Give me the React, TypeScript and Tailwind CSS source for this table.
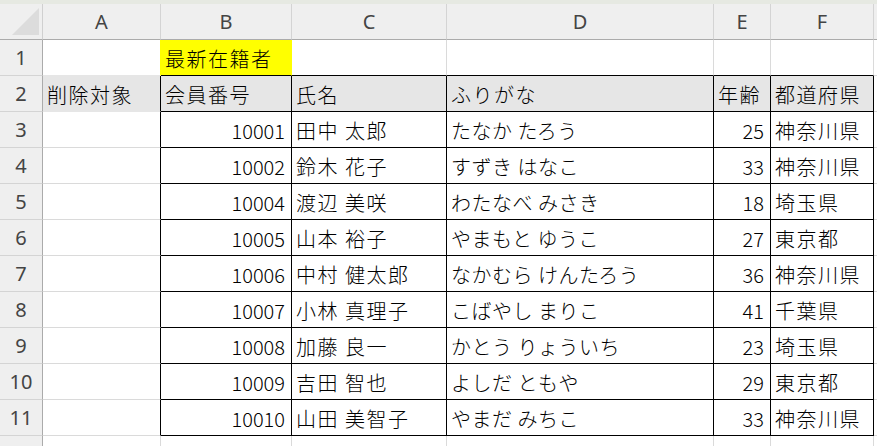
const COLS = ["A", "B", "C", "D", "E", "F", ""];

const FILL_GRAY = "#e6e6e6";
const YELLOW = "#ffff00";
const GRID = "#dadada";

type Row = [string, string, string, string, string];

const MEMBERS: Row[] = [
  ["10001", "田中 太郎", "たなか たろう", "25", "神奈川県"],
  ["10002", "鈴木 花子", "すずき はなこ", "33", "神奈川県"],
  ["10004", "渡辺 美咲", "わたなべ みさき", "18", "埼玉県"],
  ["10005", "山本 裕子", "やまもと ゆうこ", "27", "東京都"],
  ["10006", "中村 健太郎", "なかむら けんたろう", "36", "神奈川県"],
  ["10007", "小林 真理子", "こばやし まりこ", "41", "千葉県"],
  ["10008", "加藤 良一", "かとう りょういち", "23", "埼玉県"],
  ["10009", "吉田 智也", "よしだ ともや", "29", "東京都"],
  ["10010", "山田 美智子", "やまだ みちこ", "33", "神奈川県"],
];

// row -> col index (0 = A) -> value
function cellValue(r: number, c: number): { text: string; num?: boolean } | null {
  if (r === 1 && c === 1) return { text: "最新在籍者" };
  if (r === 2 && c === 0) return { text: "削除対象" };
  if (r === 2) {
    const head = ["会員番号", "氏名", "ふりがな", "年齢", "都道府県"];
    if (c >= 1 && c <= 5) return { text: head[c - 1] };
  }
  if (r >= 3 && r <= 11 && c >= 1 && c <= 5) {
    const v = MEMBERS[r - 3][c - 1];
    return { text: v, num: c === 1 || c === 4 };
  }
  return null;
}

function cellFill(r: number, c: number) {
  if (r === 1 && c === 1) return YELLOW;
  if (r === 2 && c <= 5) return FILL_GRAY;
  return "#ffffff";
}

function inTable(r: number, c: number) {
  return r >= 2 && r <= 11 && c >= 1 && c <= 5;
}

function Cell({ r, c }: { r: number; c: number }) {
  const fill = cellFill(r, c);
  const v = cellValue(r, c);

  let right = GRID;
  if (fill !== "#ffffff") right = fill;
  if (r === 1 && c === 0) right = YELLOW;
  if (inTable(r, c) || inTable(r, c + 1)) right = "#000000";

  let bottom = GRID;
  if (fill !== "#ffffff") bottom = fill;
  if (r === 1 && c === 0) bottom = FILL_GRAY;
  if (inTable(r, c) || inTable(r + 1, c)) bottom = "#000000";

  // kana column is a bit tighter than kanji
  const tracking = v?.num ? "tracking-[0px]" : c === 3 && r >= 3 ? "tracking-[0.5px]" : "tracking-[1.5px]";

  return (
    <div
      className={`flex h-full items-center overflow-hidden whitespace-nowrap border-b border-r pt-[2px] text-[20px] text-black ${
        v?.num ? "justify-end pr-[6px]" : "pl-[4px]"
      }`}
      style={{ backgroundColor: fill, borderRightColor: right, borderBottomColor: bottom }}
    >
      {v && <span className={`font-light ${tracking}`}>{v.text}</span>}
    </div>
  );
}

export default function App() {
  const rows = Array.from({ length: 12 }, (_, i) => i + 1);

  return (
    <div
      className="h-[446px] w-[877px] overflow-hidden bg-white"
      style={{ fontFamily: "'Noto Sans CJK JP', sans-serif" }}
    >
      <div className="h-[4px] bg-[#e6e9e2]" />
      <div className="grid grid-cols-[43px_118px_131px_155px_267px_57px_103px_1fr] auto-rows-[36px]">
        {/* corner */}
        <div className="relative border-b border-r border-b-[#ababab] border-r-[#d0d0d0] bg-[#efefef]">
          <svg className="absolute left-0 top-0" width="42" height="35" viewBox="0 0 42 35">
            <polygon points="39,4 39,31 12,31" fill="#dcdcdc" />
          </svg>
        </div>
        {COLS.map((col, i) => (
          <div
            key={i}
            className="flex items-center justify-center border-b border-r border-b-[#ababab] border-r-[#d4d4d4] bg-[#efefef] text-[20px] text-[#444]"
            style={{ fontFamily: "'Noto Sans', sans-serif" }}
          >
            {col}
          </div>
        ))}

        {rows.map((r) => (
          <div key={r} className="contents">
            <div
              className="flex items-center justify-center border-b border-r border-b-[#d4d4d4] border-r-[#ababab] bg-[#efefef] text-[20px] text-[#444]"
              style={{ fontFamily: "'Noto Sans', sans-serif" }}
            >
              {r}
            </div>
            {COLS.map((_, c) => (
              <Cell key={c} r={r} c={c} />
            ))}
          </div>
        ))}
      </div>
    </div>
  );
}
